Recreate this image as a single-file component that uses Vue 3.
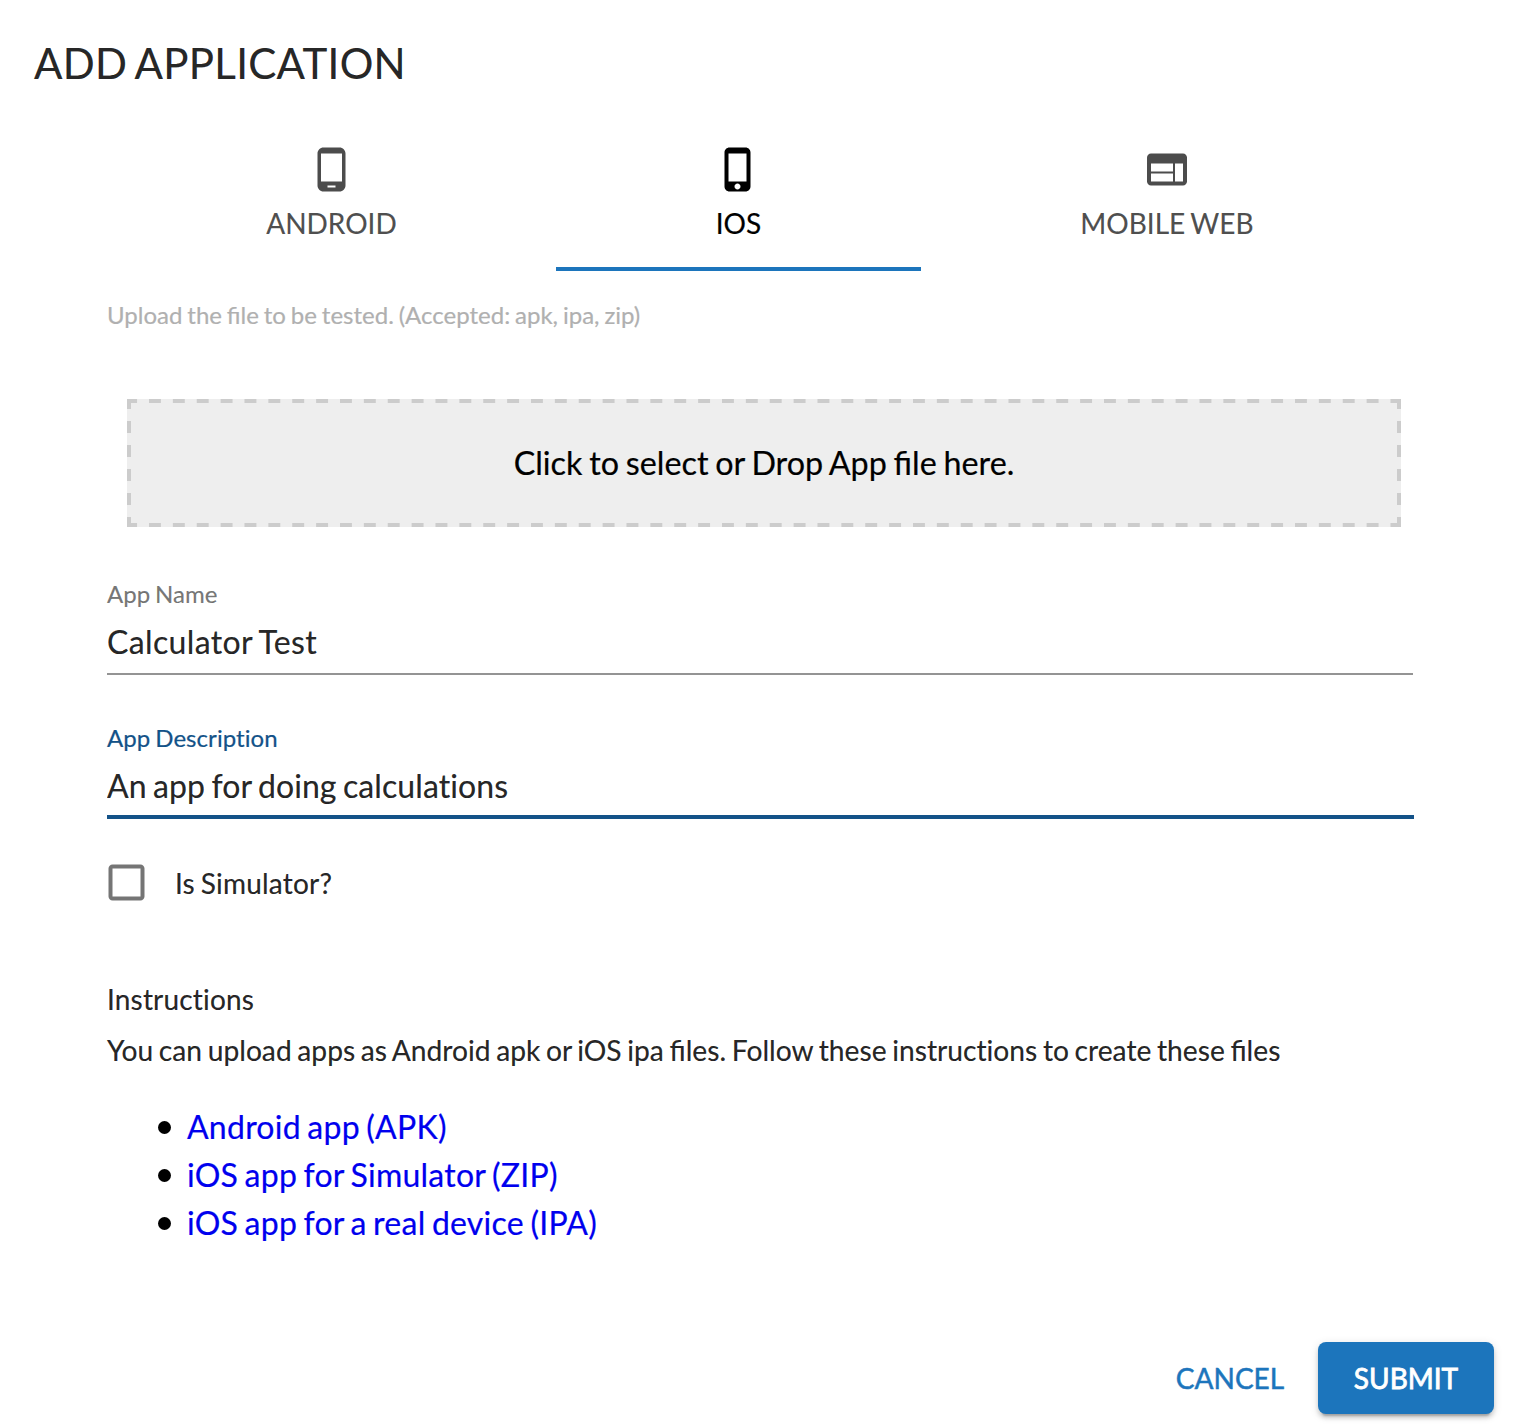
<script setup>
import { ref } from 'vue'

const tabs = [
  { id: 'android', label: 'ANDROID', box: '0.25 0.25 24 24', icon: 'M16 1H8C6.34 1 5 2.34 5 4v16c0 1.66 1.34 3 3 3h8c1.66 0 3-1.34 3-3V4c0-1.66-1.34-3-3-3zm-2 20h-4v-1h4v1zm3.25-3H6.75V4h10.5v14z' },
  { id: 'ios', label: 'IOS', box: '0.25 0.25 24 24', icon: 'M15.5 1h-8C6.12 1 5 2.12 5 3.5v17C5 21.88 6.12 23 7.5 23h8c1.38 0 2.5-1.12 2.5-2.5v-17C18 2.12 16.88 1 15.5 1zm-4 21c-.83 0-1.5-.67-1.5-1.5s.67-1.5 1.5-1.5 1.5.67 1.5 1.5-.67 1.5-1.5 1.5zm4.5-4H7V4h9v14z' },
  { id: 'web', label: 'MOBILE WEB', box: '0 0.25 24 24', icon: 'M20 4H4c-1.1 0-1.99.9-1.99 2L2 18c0 1.1.9 2 2 2h16c1.1 0 2-.9 2-2V6c0-1.1-.9-2-2-2zm-5 14H4v-4h11v4zm0-5H4V9h11v4zm5 5h-4V9h4v9z' },
]
const active = ref('ios')
const appName = ref('Calculator Test')
const description = ref('An app for doing calculations')
const links = ['Android app (APK)', 'iOS app for Simulator (ZIP)', 'iOS app for a real device (IPA)']
</script>

<template>
  <main class="dialog">
    <h1>ADD APPLICATION</h1>
    <section class="content">
      <nav class="tabs">
        <button v-for="t in tabs" :key="t.id" class="tab" :class="[t.id, { active: active === t.id }]" @click="active = t.id">
          <svg :viewBox="t.box"><path :d="t.icon" /></svg>
          <span>{{ t.label }}</span>
        </button>
      </nav>
      <p class="hint">Upload the file to be tested. (Accepted: apk, ipa, zip)</p>
      <div class="dropzone">Click to select or Drop App file here.</div>
      <label class="field">
        <span>App Name</span>
        <input v-model="appName" />
      </label>
      <label class="field focused">
        <span>App Description</span>
        <input v-model="description" />
      </label>
      <div class="check">
        <svg viewBox="0.25 0.25 24 24"><path d="M19 5v14H5V5h14m0-2H5c-1.1 0-2 .9-2 2v14c0 1.1.9 2 2 2h14c1.1 0 2-.9 2-2V5c0-1.1-.9-2-2-2z" /></svg>
        <span>Is Simulator?</span>
      </div>
      <h2>Instructions</h2>
      <p class="intro">You can upload apps as Android apk or iOS ipa files. Follow these <span class="plain">instructions</span> to create these files</p>
      <ul>
        <li v-for="l in links" :key="l"><a href="#">{{ l }}</a></li>
      </ul>
    </section>
    <footer>
      <button class="cancel">CANCEL</button>
      <button class="submit">SUBMIT</button>
    </footer>
  </main>
</template>

<style>
body { margin: 0; background: #fff; }
</style>

<style scoped>
* { box-sizing: border-box; }
.dialog { height: 1426px; overflow: hidden; font-family: Lato, sans-serif; color: rgba(0, 0, 0, 0.87); display: flex; flex-direction: column; -webkit-text-stroke: 0.2px currentColor; }
h1 { margin: 31px 0 0 34px; height: 64px; line-height: 64px; font-size: 42px; font-weight: 400; white-space: nowrap; letter-spacing: 0.33px; word-spacing: -2.6px; }
.content { margin: 32px 111px 0 107px; }
.tabs { display: flex; height: 144px; }
button { border: 0; background: none; font-family: inherit; padding: 0; cursor: pointer; }
.tab { display: flex; flex-direction: column; align-items: center; color: rgba(0, 0, 0, 0.7); font-size: 28px; line-height: 36px; padding-top: 18.5px; word-spacing: -1.7px; }
.tab.android { width: 449px; }
.tab.ios { width: 365px; }
.tab.web { width: 492px; }
.tab.active { color: #000; border-bottom: 4px solid #1c75bc; }
.tab svg { width: 48px; height: 48px; fill: currentColor; stroke: none; margin-bottom: 11.5px; }
.hint { margin: 26px 0 0; font-size: 24px; line-height: 36px; color: #b0b0b0; word-spacing: -1.25px; }
.dropzone {
  margin: 66px 12px 0 20px; height: 128px; padding-bottom: 2px; color: #000;
  display: flex; align-items: center; justify-content: center; font-size: 32.3px; word-spacing: -1.5px;
  background:
    linear-gradient(90deg, #ccc 12px, transparent 12px) -1.9px 0 / 23.885px 4px repeat-x,
    linear-gradient(90deg, #ccc 12px, transparent 12px) -1.9px 100% / 23.885px 4px repeat-x,
    linear-gradient(#ccc 12px, transparent 12px) 0 -2px / 4px 24px repeat-y,
    linear-gradient(#ccc 12px, transparent 12px) 100% -2px / 4px 24px repeat-y,
    #eee;
}
.field { display: flex; flex-direction: column; margin-top: 52px; height: 96px; border-bottom: 2px solid #949494; }
.field span { font-size: 24px; line-height: 30px; color: rgba(0, 0, 0, 0.54); word-spacing: -1.25px; font-variant-ligatures: none; }
.field input { border: 0; outline: 0; padding: 0; margin-top: 13px; height: 38px; background: none; font: 32px Lato, sans-serif; color: rgba(0, 0, 0, 0.87); letter-spacing: 0.36px; word-spacing: -1.5px; }
.field.focused { margin: 48px -1px 0 0; border-bottom: 4px solid #135288; }
.field.focused span { color: #135288; letter-spacing: 0.06px; }
.field.focused input { letter-spacing: 0.09px; word-spacing: -1.9px; }
.check { display: flex; align-items: center; margin-top: 40px; height: 48px; font-size: 28px; letter-spacing: 0.2px; word-spacing: -1.5px; }
.check svg { width: 48px; height: 48px; margin-left: -4px; margin-right: 24px; fill: rgba(0, 0, 0, 0.54); }
h2 { margin: 72px 0 0; font-size: 28px; font-weight: 400; line-height: 40px; letter-spacing: 0.17px; }
.intro { margin: 11px 0 0; font-size: 28.2px; line-height: 40px; white-space: nowrap; word-spacing: -1.55px; }
.plain { font-variant-ligatures: none; }
ul { margin: 33px 0 0; padding: 0 0 0 51px; list-style: none; font-size: 32px; line-height: 48px; letter-spacing: 0.25px; word-spacing: -2px; }
li { display: flex; align-items: center; }
li::before { content: ''; width: 13px; height: 13px; margin: 1px 16px 0 0; border-radius: 50%; background: #000; }
a { color: #00e; text-decoration: none; }
footer { display: flex; justify-content: flex-end; margin: auto 30px 12px 0; }
footer button { height: 72px; font-size: 28px; border-radius: 8px; -webkit-text-stroke: 0.5px currentColor; }
.cancel { width: 176px; color: #1c75bc; }
.submit { width: 176px; background: #1c75bc; color: #fff; -webkit-text-stroke-width: 0.8px; box-shadow: 0 6px 2px -4px rgba(0,0,0,.2), 0 4px 4px rgba(0,0,0,.14), 0 2px 10px rgba(0,0,0,.12); }
</style>
